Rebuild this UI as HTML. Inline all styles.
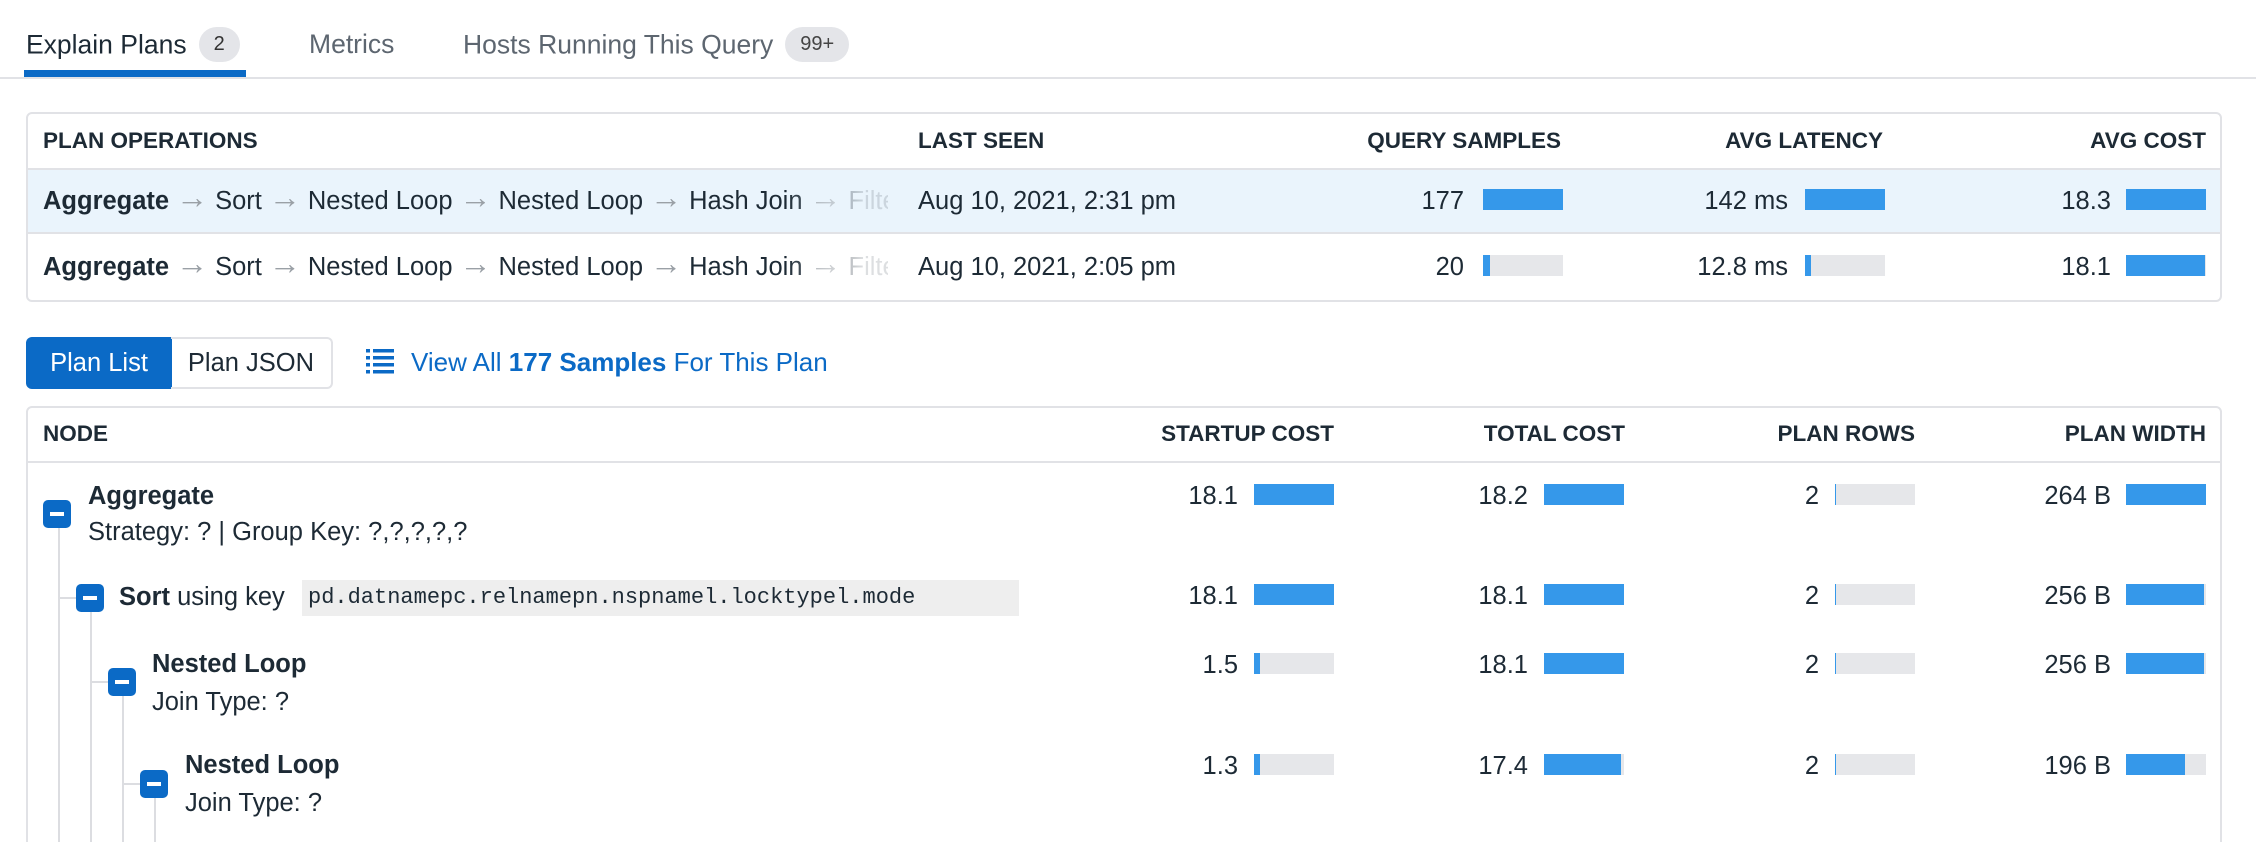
<!DOCTYPE html>
<html><head><meta charset="utf-8">
<style>
*{box-sizing:border-box;margin:0;padding:0}
html,body{width:2256px;height:842px;overflow:hidden}
body{background:#fff;font-family:"Liberation Sans",sans-serif;color:#1d2a35;position:relative}
.a{position:absolute;white-space:nowrap}
.tab{font-size:26.5px;top:28px}
.badge{display:inline-block;background:#e4e5e9;border-radius:20px;font-size:20px;padding:6px 15px;color:#333;vertical-align:middle;position:relative;top:-2px;margin-left:12px}
.hd{font-weight:bold;font-size:22.5px}
.t{font-size:25.5px}
.r{text-align:right}
.bar{position:absolute;width:80px;height:21px;background:#e6e7ea}
.bar i{display:block;height:100%;background:#3598ea}
.ar{display:inline-block;width:46px;text-align:center;color:#9aa0a6;font-size:32px;font-weight:bold;line-height:20px;vertical-align:1px}
.mb{position:absolute;width:28px;height:28px;background:#0b6ac6;border-radius:5px}
.mb:after{content:"";position:absolute;left:7px;top:12px;width:14px;height:4px;background:#fff}
.vl{position:absolute;width:2px;background:#dcdde1}
.hl{position:absolute;height:2px;background:#dcdde1}
b{font-weight:bold}
.ops{width:845px;overflow:hidden;-webkit-mask-image:linear-gradient(90deg,#000 88%,rgba(0,0,0,.15) 97%);mask-image:linear-gradient(90deg,#000 88%,rgba(0,0,0,.15) 97%)}
</style></head><body>
<div class="a tab" style="left:26px;top:29px">Explain Plans<span class="badge">2</span></div>
<div class="a tab" style="left:309px;top:29px;color:#5d6670">Metrics</div>
<div class="a tab" style="left:463px;top:29px;color:#5d6670">Hosts Running This Query<span class="badge" style="color:#444">99+</span></div>
<div class="a" style="left:24px;top:70px;width:222px;height:7px;background:#0b6ac6"></div>
<div class="a" style="left:0;top:77px;width:2256px;height:2px;background:#e1e2e6"></div>

<div class="a" style="left:26px;top:112px;width:2196px;height:190px;border:2px solid #e1e2e6;border-radius:6px"></div>
<div class="a" style="left:28px;top:168px;width:2192px;height:66px;background:#eaf4fc;border-top:2px solid #e1e2e6;border-bottom:2px solid #e1e2e6"></div>
<div class="a hd" style="left:43px;top:128px">PLAN OPERATIONS</div>
<div class="a hd" style="left:918px;top:128px">LAST SEEN</div>
<div class="a hd r" style="right:695px;top:128px">QUERY SAMPLES</div>
<div class="a hd r" style="right:373px;top:128px">AVG LATENCY</div>
<div class="a hd r" style="right:50px;top:128px">AVG COST</div>

<div class="a t ops" style="left:43px;top:187px"><b>Aggregate</b><span class="ar">→</span>Sort<span class="ar">→</span>Nested Loop<span class="ar">→</span>Nested Loop<span class="ar">→</span>Hash Join<span class="ar">→</span>Filter</div>
<div class="a t" style="left:918px;top:187px">Aug 10, 2021, 2:31 pm</div>
<div class="a t r" style="right:792px;top:187px">177</div><div class="bar" style="left:1483px;top:189px"><i style="width:100%"></i></div>
<div class="a t r" style="right:468px;top:187px">142 ms</div><div class="bar" style="left:1805px;top:189px"><i style="width:100%"></i></div>
<div class="a t r" style="right:145px;top:187px">18.3</div><div class="bar" style="left:2126px;top:189px"><i style="width:100%"></i></div>

<div class="a t ops" style="left:43px;top:253px"><b>Aggregate</b><span class="ar">→</span>Sort<span class="ar">→</span>Nested Loop<span class="ar">→</span>Nested Loop<span class="ar">→</span>Hash Join<span class="ar">→</span>Filter</div>
<div class="a t" style="left:918px;top:253px">Aug 10, 2021, 2:05 pm</div>
<div class="a t r" style="right:792px;top:253px">20</div><div class="bar" style="left:1483px;top:255px"><i style="width:9%"></i></div>
<div class="a t r" style="right:468px;top:253px">12.8 ms</div><div class="bar" style="left:1805px;top:255px"><i style="width:8%"></i></div>
<div class="a t r" style="right:145px;top:253px">18.1</div><div class="bar" style="left:2126px;top:255px"><i style="width:99%"></i></div>

<div class="a t" style="left:26px;top:337px;width:146px;height:52px;background:#0b6ac6;color:#fff;border-radius:6px 0 0 6px;text-align:center;line-height:52px">Plan List</div>
<div class="a t" style="left:171px;top:337px;width:162px;height:52px;border:2px solid #e1e2e6;border-left:none;border-radius:0 6px 6px 0;text-align:center;line-height:48px">Plan JSON</div>
<svg class="a" style="left:366px;top:349px" width="28" height="25" viewBox="0 0 28 25" fill="#0b6ac6"><rect x="0" y="0" width="4" height="3.5"/><rect x="7" y="0" width="21" height="3.5"/><rect x="0" y="7" width="4" height="3.5"/><rect x="7" y="7" width="21" height="3.5"/><rect x="0" y="14" width="4" height="3.5"/><rect x="7" y="14" width="21" height="3.5"/><rect x="0" y="21" width="4" height="3.5"/><rect x="7" y="21" width="21" height="3.5"/></svg>
<div class="a t" style="left:411px;top:347px;color:#0b6ac6;font-size:26px">View All <b>177 Samples</b> For This Plan</div>

<div class="a" style="left:26px;top:406px;width:2196px;height:450px;border:2px solid #e1e2e6;border-radius:6px"></div>
<div class="a" style="left:28px;top:461px;width:2192px;height:2px;background:#e1e2e6"></div>
<div class="a hd" style="left:43px;top:421px">NODE</div>
<div class="a hd r" style="right:922px;top:421px">STARTUP COST</div>
<div class="a hd r" style="right:631px;top:421px">TOTAL COST</div>
<div class="a hd r" style="right:341px;top:421px">PLAN ROWS</div>
<div class="a hd r" style="right:50px;top:421px">PLAN WIDTH</div>

<div class="vl" style="left:58px;top:528px;height:320px"></div>
<div class="vl" style="left:90px;top:612px;height:240px"></div>
<div class="vl" style="left:122px;top:696px;height:150px"></div>
<div class="vl" style="left:154px;top:798px;height:50px"></div>
<div class="hl" style="left:58px;top:597px;width:18px"></div>
<div class="hl" style="left:90px;top:681px;width:18px"></div>
<div class="hl" style="left:122px;top:783px;width:18px"></div>

<div class="mb" style="left:43px;top:500px"></div>
<div class="a t" style="left:88px;top:482px"><b>Aggregate</b></div>
<div class="a t" style="left:88px;top:518px">Strategy: ? | Group Key: ?,?,?,?,?</div>
<div class="mb" style="left:76px;top:584px"></div>
<div class="a t" style="left:119px;top:583px"><b>Sort</b> using key</div>
<div class="a" style="left:302px;top:580px;width:717px;height:36px;background:#eeeeee;font-family:'Liberation Mono',monospace;font-size:22px;line-height:36px;padding-left:6px">pd.datnamepc.relnamepn.nspnamel.locktypel.mode</div>
<div class="mb" style="left:108px;top:668px"></div>
<div class="a t" style="left:152px;top:650px"><b>Nested Loop</b></div>
<div class="a t" style="left:152px;top:688px">Join Type: ?</div>
<div class="mb" style="left:140px;top:770px"></div>
<div class="a t" style="left:185px;top:751px"><b>Nested Loop</b></div>
<div class="a t" style="left:185px;top:789px">Join Type: ?</div>

<div class="a t r" style="right:1018px;top:482px">18.1</div><div class="bar" style="left:1254px;top:484px"><i style="width:100%"></i></div>
<div class="a t r" style="right:728px;top:482px">18.2</div><div class="bar" style="left:1544px;top:484px"><i style="width:100%"></i></div>
<div class="a t r" style="right:437px;top:482px">2</div><div class="bar" style="left:1835px;top:484px"><i style="width:1%"></i></div>
<div class="a t r" style="right:145px;top:482px">264 B</div><div class="bar" style="left:2126px;top:484px"><i style="width:100%"></i></div>

<div class="a t r" style="right:1018px;top:582px">18.1</div><div class="bar" style="left:1254px;top:584px"><i style="width:100%"></i></div>
<div class="a t r" style="right:728px;top:582px">18.1</div><div class="bar" style="left:1544px;top:584px"><i style="width:100%"></i></div>
<div class="a t r" style="right:437px;top:582px">2</div><div class="bar" style="left:1835px;top:584px"><i style="width:1%"></i></div>
<div class="a t r" style="right:145px;top:582px">256 B</div><div class="bar" style="left:2126px;top:584px"><i style="width:97%"></i></div>

<div class="a t r" style="right:1018px;top:651px">1.5</div><div class="bar" style="left:1254px;top:653px"><i style="width:8%"></i></div>
<div class="a t r" style="right:728px;top:651px">18.1</div><div class="bar" style="left:1544px;top:653px"><i style="width:100%"></i></div>
<div class="a t r" style="right:437px;top:651px">2</div><div class="bar" style="left:1835px;top:653px"><i style="width:1%"></i></div>
<div class="a t r" style="right:145px;top:651px">256 B</div><div class="bar" style="left:2126px;top:653px"><i style="width:97%"></i></div>

<div class="a t r" style="right:1018px;top:752px">1.3</div><div class="bar" style="left:1254px;top:754px"><i style="width:7%"></i></div>
<div class="a t r" style="right:728px;top:752px">17.4</div><div class="bar" style="left:1544px;top:754px"><i style="width:96%"></i></div>
<div class="a t r" style="right:437px;top:752px">2</div><div class="bar" style="left:1835px;top:754px"><i style="width:1%"></i></div>
<div class="a t r" style="right:145px;top:752px">196 B</div><div class="bar" style="left:2126px;top:754px"><i style="width:74%"></i></div>
</body></html>
